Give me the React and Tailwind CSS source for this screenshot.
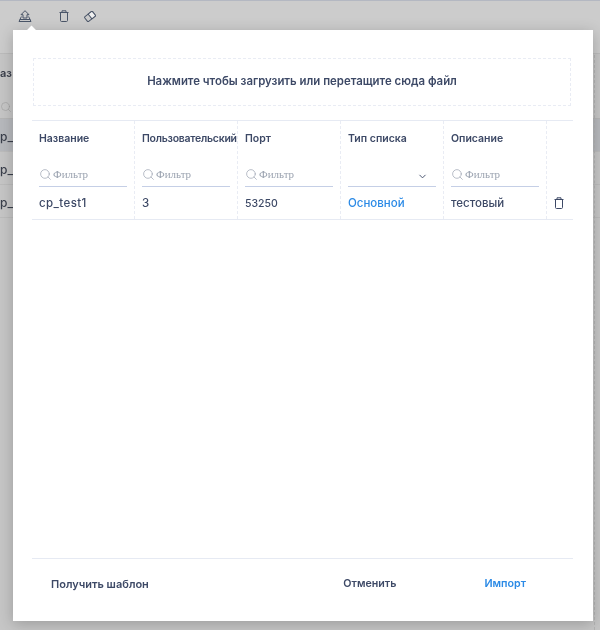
import React from 'react'
import { Search, ChevronDown } from 'lucide-react'

const sans = 'font-["Inter","Noto_Sans",sans-serif]'

const TrashIcon = ({ className }) => (
  <svg viewBox="0 0 10 12" fill="none" stroke="currentColor" strokeWidth="1" className={className}>
    <path d="M.5 2.5h9M3 2.5V.8h4v1.7M1.5 2.5v8c0 .6.4 1 1 1h5c.6 0 1-.4 1-1v-8" />
  </svg>
)

const UploadIcon = () => (
  <svg viewBox="0 0 14 12" fill="none" stroke="#4a5568" strokeWidth="1" className="w-[14px] h-[12px]">
    <path d="M7 .7 3 4.7h2V8h4V4.7h2L7 .7Z" />
    <path d="M3.4 6.5 1 11.5h12l-2.4-5" />
    <path d="M1.8 9.5h10.4" />
  </svg>
)

const EraserIcon = () => (
  <svg viewBox="0 0 12 11" className="w-[12px] h-[11px]">
    <g transform="rotate(-38 6 5.5)">
      <rect x="1" y="2.5" width="10" height="6" rx="1" fill="none" stroke="#4a5568" strokeWidth="1" />
      <path d="M6 2.5h4c.6 0 1 .4 1 1v4c0 .6-.4 1-1 1H6Z" fill="#f1f1f1" stroke="#4a5568" strokeWidth="1" />
    </g>
  </svg>
)

const FilterInput = () => (
  <div className="flex items-center gap-px h-[24px] border-b border-[#c5cfe6] text-[#9ba3b0]">
    <Search className="w-[13px] h-[13px]" strokeWidth={1.3} />
    <span className='font-["Liberation_Serif",serif] text-[11px]'>Фильтр</span>
  </div>
)

const columns = [
  { title: 'Название', value: 'cp_test1', valueClass: 'text-[11.5px] tracking-[0.4px] text-[#3d4966]' },
  { title: 'Пользовательский', titleClass: 'tracking-[-0.25px]', value: '3', valueClass: 'text-[11.5px] text-[#3d4966]' },
  { title: 'Порт', value: '53250', valueClass: 'text-[10.5px] text-[#3d4966]' },
  { title: 'Тип списка', value: 'Основной', select: true, valueClass: 'text-[11.5px] text-[#2b8ae6]' },
  { title: 'Описание', value: 'тестовый', valueClass: 'text-[11.5px] text-[#3d4966]' },
]

const Background = () => (
  <div className="w-full h-full bg-[#c6c6c6] flex flex-col text-[#3a3f4b]">
    <div className="h-[1px] bg-[#b4b8c2]" />
    <div className="h-[53px] bg-[#cccccc] border-b border-[#bcbcbc] pl-[18px] pt-[9px]">
      <div className="flex items-center h-[12px]">
        <UploadIcon />
        <div className="w-[27px]" />
        <TrashIcon className="w-[10px] h-[12px] text-[#4a5568]" />
        <div className="w-[15px]" />
        <EraserIcon />
      </div>
    </div>
    <div className="h-[38px] flex items-center text-[11px] font-semibold">
      <span>аз</span>
    </div>
    <div className="h-[27px] pt-[3px] flex items-center border-b border-[#b6b6b6]">
      <Search className="w-[12px] h-[12px] text-[#a0a0a0]" strokeWidth={1.3} />
    </div>
    {[0, 1, 2].map(i => (
      <div key={i} className={`h-[33px] pt-[3px] flex items-center border-b border-[#bcbcbc] ${i === 0 ? 'bg-[#b7b9bd]' : ''}`}>
        <span className="text-[12px] font-medium">p_</span>
      </div>
    ))}
  </div>
)

export default function App() {
  return (
    <div className={`relative w-[600px] h-[630px] overflow-hidden blur-[0.35px] ${sans}`}>
      <Background />

      {/* dashed column edge showing right of the popover */}
      <div className="absolute left-[594px] top-[55px] bottom-0 border-r border-dashed border-[#b4b4b4]" />

      {/* Popover */}
      <div className="absolute left-[13px] top-[30px] w-[580px] h-[591px] bg-white shadow-[0_3px_14px_rgba(0,0,0,0.22)] flex flex-col pl-[19px] pr-[20px]">
        <div className="absolute left-[14.5px] -top-[3.5px] w-[7px] h-[7px] rotate-45 bg-white" />

        <div className="mt-[28px] ml-[1px] mr-[2px] h-[48px] shrink-0 border border-dashed border-[#e9ecf4] flex items-center justify-center text-[#3d4966] text-[11.4px] font-semibold">
          Нажмите чтобы загрузить или перетащите сюда файл
        </div>

        <div className="mt-[14px] border-y border-[#e6eaf3] flex">
          {columns.map(col => (
            <div key={col.title} className="w-[103px] shrink-0 border-r border-dashed border-[#e9ecf4]">
              <div className="h-[66px] pl-[7px] flex flex-col overflow-hidden">
                <div className={`h-[35px] flex items-center text-[10.5px] font-semibold text-[#3d4966] whitespace-nowrap ${col.titleClass || ''}`}>{col.title}</div>
                <div className="mt-[7px] w-[88px]">
                  {col.select ? (
                    <div className="h-[24px] pt-[3px] flex items-center justify-end pr-[8px] border-b border-[#c5cfe6] text-[#3d4966]">
                      <ChevronDown className="w-[11px] h-[11px]" strokeWidth={2} />
                    </div>
                  ) : (
                    <FilterInput />
                  )}
                </div>
              </div>
              <div className={`h-[32px] pl-[7px] pt-[2px] flex items-center font-medium ${col.valueClass}`}>
                {col.value}
              </div>
            </div>
          ))}
          <div className="flex-1 flex flex-col">
            <div className="h-[66px]" />
            <div className="h-[32px] flex items-center justify-center pr-[3px]">
              <TrashIcon className="w-[10px] h-[12px] text-[#3d4966]" />
            </div>
          </div>
        </div>

        <div className="flex-1" />

        <div className="h-[63px] shrink-0 pb-[11px] border-t border-[#e6eaf3] flex items-center text-[10.7px] font-semibold">
          <button className="ml-[19px] text-[11px] text-[#3d4966]">Получить шаблон</button>
          <button className="ml-auto text-[#3d4966]">Отменить</button>
          <button className="ml-[88px] mr-[47px] text-[#2b8ae6]">Импорт</button>
        </div>
      </div>
    </div>
  )
}
